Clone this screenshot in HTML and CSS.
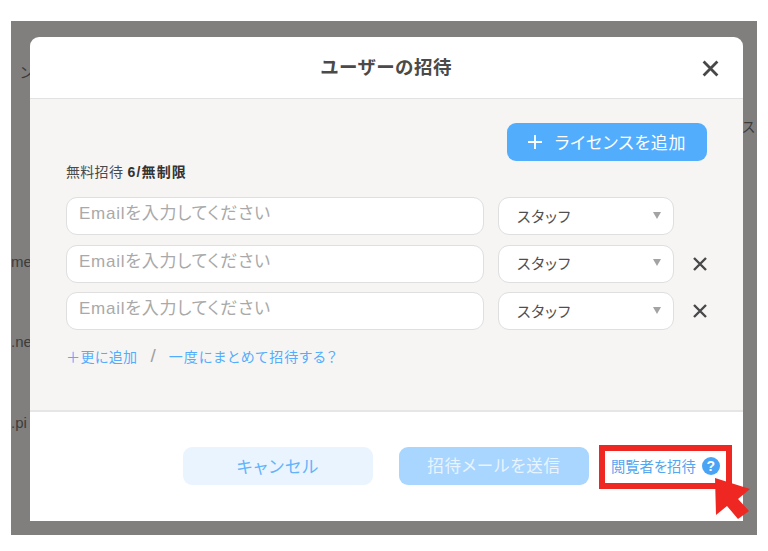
FILE: index.html
```html
<!DOCTYPE html>
<html lang="ja">
<head>
<meta charset="utf-8">
<title>ユーザーの招待</title>
<link rel="stylesheet" href="styles.css">
</head>
<body>
<div class="backdrop">
  <span class="bg-text bg-a">ン</span>
  <span class="bg-text bg-b">me</span>
  <span class="bg-text bg-c">.ne</span>
  <span class="bg-text bg-d">.pi</span>
  <span class="bg-text bg-e">ンス</span>
  <div class="modal">
    <header class="modal-head">
      <h1 class="modal-title">ユーザーの招待</h1>
      <svg class="close-main" viewBox="0 0 16 16" aria-hidden="true"><path d="M1.5 1.5L14.5 14.5M14.5 1.5L1.5 14.5"/></svg>
    </header>
    <section class="modal-body">
      <div class="add-wrap">
        <button class="add-btn"><svg class="plus" viewBox="0 0 14 14" aria-hidden="true"><path d="M7 0V14M0 7H14"/></svg><span>ライセンスを追加</span></button>
      </div>
      <p class="quota">無料招待 <b>6/無制限</b></p>
      <div class="rows">
        <div class="row">
          <div class="field">Emailを入力してください</div>
          <div class="select"><span>スタッフ</span><i class="caret"></i></div>
        </div>
        <div class="row">
          <div class="field">Emailを入力してください</div>
          <div class="select"><span>スタッフ</span><i class="caret"></i></div>
          <svg class="remove" viewBox="0 0 14 14" aria-hidden="true"><path d="M1 1L13 13M13 1L1 13"/></svg>
        </div>
        <div class="row">
          <div class="field">Emailを入力してください</div>
          <div class="select"><span>スタッフ</span><i class="caret"></i></div>
          <svg class="remove" viewBox="0 0 14 14" aria-hidden="true"><path d="M1 1L13 13M13 1L1 13"/></svg>
        </div>
      </div>
      <div class="links"><a>＋更に追加</a><span class="sep">/</span><a class="link-wide">一度にまとめて招待する？</a></div>
    </section>
    <footer class="modal-foot">
      <button class="btn btn-cancel">キャンセル</button>
      <button class="btn btn-send">招待メールを送信</button>
      <a class="viewer"><span>閲覧者を招待</span><i class="help">?</i></a>
    </footer>
  </div>
  <div class="callout"></div>
  <svg class="cursor" viewBox="0 0 768 551" aria-hidden="true"><polygon points="715,478 750,489 738,499 749,511 738,519 727,506 716,515"/></svg>
</div>
</body>
</html>
```
FILE: styles.css
```css
* { box-sizing: border-box; }
html, body { margin: 0; height: 551px; background: #fff; overflow: hidden; }
body {
  padding: 21px 11px 16px;
  font-family: "Liberation Sans", "Noto Sans CJK JP", sans-serif;
  font-feature-settings: "palt";
  color: #4a4a4a;
}
.backdrop {
  height: 514px;
  padding: 16px 14px 14px 19px;
  background: #807f7d;
}
.bg-text { position: absolute; font-size: 15px; color: #3c3c3c; line-height: 18px; }
.bg-a { left: 20px; top: 64px; }
.bg-b { left: 11px; top: 253px; }
.bg-c { left: 11px; top: 333px; }
.bg-d { left: 11px; top: 414px; }
.bg-e { left: 730px; top: 118px; font-size: 14px; white-space: nowrap; }
.modal {
  position: relative;
  height: 484px;
  display: flex;
  flex-direction: column;
  background: #fff;
  border-radius: 9px 9px 0 0;
}
.modal-head {
  flex: none;
  height: 62px;
  display: flex;
  align-items: center;
  justify-content: center;
  position: relative;
  border-bottom: 1px solid #e2e2e2;
}
.modal-title { margin: 0 0 4px; font-size: 18.5px; font-weight: 700; color: #4a4a4a; letter-spacing: .65px; }
.close-main {
  position: absolute; right: 24px; top: 23px;
  width: 17px; height: 17px; fill: none; stroke: #484848; stroke-width: 2.6;
}
.modal-body {
  flex: none;
  height: 313px;
  padding: 24px 36px 0;
  background: #f6f5f4;
  border-bottom: 2px solid #e6e6e6;
}
.add-wrap { display: flex; justify-content: flex-end; }
.add-btn {
  width: 200px; height: 38px; margin: 0; padding: 0 0 2px;
  display: flex; align-items: center; justify-content: center; gap: 13px;
  border: 0; border-radius: 9px;
  background: #53adfd; color: #fff;
  font: inherit; font-size: 17px; letter-spacing: .75px;
}
.plus { width: 14px; height: 14px; margin-top: 2px; fill: none; stroke: #fff; stroke-width: 1.8; }
.quota { margin: 1px 0 0; height: 22px; line-height: 21px; font-size: 14px; color: #4a4a4a; letter-spacing: .3px; }
.quota b { color: #333; letter-spacing: 1.2px; }
.rows { margin-top: 13px; display: flex; flex-direction: column; gap: 9.5px; }
.row { display: flex; align-items: center; height: 38px; }
.field {
  width: 418px; height: 38px; padding: 0 12px 9px;
  display: flex; align-items: center;
  background: #fff; border: 1.5px solid #dfdfdf; border-radius: 11px;
  font-size: 17px; color: #a9a9a9; letter-spacing: .75px;
}
.select {
  width: 176px; height: 38px; margin-left: 14px; padding: 0 12px 2px 18px;
  display: flex; align-items: center; justify-content: space-between;
  background: #fff; border: 1.5px solid #dfdfdf; border-radius: 11px;
  font-size: 15px; color: #4f4f4f; letter-spacing: .8px;
}
.caret { width: 0; height: 0; border: 4.5px solid transparent; border-top: 7px solid #a3a3a3; border-bottom: 0; }
.remove { width: 14px; height: 14px; margin-left: 19px; fill: none; stroke: #484848; stroke-width: 2.4; }
.links { margin-top: 15px; display: flex; align-items: center; font-size: 14px; color: #53adfd; letter-spacing: .4px; }
.sep { margin: 0 13px; font-size: 19px; color: #a0a0a0; letter-spacing: 0; }
.link-wide { letter-spacing: 1px; }
.modal-foot {
  flex: 1;
  display: flex;
  align-items: flex-start;
  padding: 35px 0 0 153px;
}
.btn {
  width: 190px; height: 38px; margin: 0;
  border: 0; border-radius: 9px;
  font: inherit; letter-spacing: .8px;
}
.btn-cancel { padding: 0 0 2px; background: #eaf4fe; color: #62b3fb; font-size: 17px; letter-spacing: 1.2px; }
.btn-send { margin-left: 26px; padding: 0 0 2px; background: #a9d6fe; color: #e8f4ff; font-size: 16.5px; }
.viewer {
  margin: 0 0 0 22px; height: 38px; padding-bottom: 2px;
  display: flex; align-items: center; gap: 6px;
  font-size: 14.3px; color: #53a6f0;
}
.help {
  width: 18px; height: 18px; margin-top: 2px; border-radius: 50%;
  display: flex; align-items: center; justify-content: center;
  background: #4aa4f5; color: #fff; font-size: 14px; font-weight: 700; font-style: normal;
}
.callout { position: absolute; left: 599px; top: 445px; width: 133px; height: 44px; border: 6px solid #ee2722; }
.cursor { position: absolute; left: 0; top: 0; width: 768px; height: 551px; fill: #ee2722; }
```
